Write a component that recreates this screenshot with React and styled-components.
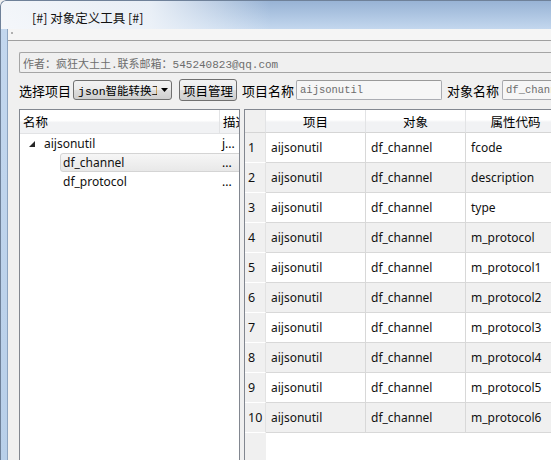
import React from 'react'
import styled, { createGlobalStyle } from 'styled-components'

const Global = createGlobalStyle`
  html, body {
    margin: 0;
    padding: 0;
    background: #f0f0f0;
  }
  body {
    font-family: "Noto Sans", "Noto Sans CJK SC", sans-serif;
    font-size: 12px;
    color: #000;
  }
`

const Window = styled.div`
  width: 551px;
  height: 460px;
  display: flex;
  flex-direction: column;
  overflow: hidden;
  border-top-left-radius: 6px;
  background: #f0f0f0;
`

const TitleBar = styled.div`
  height: 29px;
  flex: none;
  display: flex;
  align-items: center;
  padding: 4px 0 0 31px;
  box-sizing: border-box;
  border-top: 1px solid #6f8199;
  border-left: 1px solid #6f8199;
  border-top-left-radius: 6px;
  background:
    linear-gradient(to right, rgba(246, 248, 251, 0.96) 0, rgba(240, 244, 249, 0.9) 150px, rgba(255, 255, 255, 0) 270px),
    linear-gradient(#98b3d5, #c3d7ee);
  font-family: "Noto Sans CJK SC", sans-serif;
  font-size: 12.5px;
  color: #111;
`

const Body = styled.div`
  flex: 1;
  display: flex;
  min-height: 0;
`

const Frame = styled.div`
  width: 8px;
  flex: none;
  box-sizing: border-box;
  border-left: 1px solid #6f8199;
  border-right: 1px solid #8da4c0;
  background: linear-gradient(#c3d7ee, #b8cfe9);
`

const Client = styled.div`
  flex: 1;
  min-width: 0;
  display: flex;
  flex-direction: column;
  background: #f0f0f0;
`

const ToolStrip = styled.div`
  height: 11px;
  flex: none;
  border-bottom: 1px solid #a0a0a0;
  background: #f5f5f5;
  position: relative;
`

const Grip = styled.span`
  position: absolute;
  left: 3px;
  top: 3px;
  width: 2px;
  height: 2px;
  background: #b0b0b0;
`

const Content = styled.div`
  flex: 1;
  min-height: 0;
  display: flex;
  flex-direction: column;
  padding: 11px 0 0 11px;
`

const AuthorBox = styled.div`
  height: 21px;
  box-sizing: border-box;
  border: 1px solid #a5a5a5;
  border-right: none;
  border-radius: 2px 0 0 2px;
  background: #f0f0f0;
  display: flex;
  align-items: center;
  padding-left: 3px;
  font-family: "Liberation Mono", "Noto Sans CJK SC", monospace;
  font-size: 11px;
  color: #6d6d6d;
  white-space: nowrap;
  overflow: hidden;
`

const ControlRow = styled.div`
  margin-top: 6px;
  height: 22px;
  display: flex;
  align-items: center;
  white-space: nowrap;
`

const Label = styled.span`
  flex: none;
  font-family: "Noto Sans CJK SC", sans-serif;
  font-size: 13px;
  margin-right: ${p => p.$gap || 2}px;
  margin-left: ${p => p.$left || 0}px;
`

const Combo = styled.div`
  width: 99px;
  height: 20px;
  flex: none;
  box-sizing: border-box;
  border: 1px solid #707070;
  border-radius: 3px;
  background: linear-gradient(#f2f2f2 0, #ebebeb 50%, #dddddd 50%, #cfcfcf 100%);
  display: flex;
  align-items: center;
  padding-left: 4px;
  overflow: hidden;
`

const ComboText = styled.span`
  flex: 1;
  overflow: hidden;
  font-family: "Liberation Mono", "Noto Sans CJK SC", monospace;
  font-size: 11.5px;
`

const Arrow = styled.span`
  width: 14px;
  flex: none;
  display: flex;
  justify-content: center;
`

const Button = styled.div`
  flex: none;
  margin-left: 7px;
  margin-right: 5px;
  width: 58px;
  height: 22px;
  box-sizing: border-box;
  border: 1px solid #707070;
  border-radius: 3px;
  background: linear-gradient(#f2f2f2 0, #ebebeb 50%, #dddddd 50%, #cfcfcf 100%);
  display: flex;
  align-items: center;
  justify-content: center;
  font-family: "Noto Sans CJK SC", sans-serif;
  font-size: 12.5px;
`

const Field = styled.div`
  width: ${p => p.$w}px;
  height: 20px;
  flex: none;
  box-sizing: border-box;
  border: 1px solid #abadb3;
  border-top-color: #9a9a9a;
  border-radius: 2px;
  background: #f6f6f6;
  display: flex;
  align-items: center;
  padding-left: 3px;
  font-family: "Liberation Mono", monospace;
  font-size: 10.5px;
  color: #6d6d6d;
  overflow: hidden;
`

const Panels = styled.div`
  flex: 1;
  min-height: 0;
  margin-top: 8px;
  display: flex;
  gap: 4px;
`

const TreePanel = styled.div`
  width: 221px;
  flex: none;
  box-sizing: border-box;
  border: 1px solid #828790;
  border-bottom: none;
  background: #fff;
  overflow: hidden;
`

const TreeHeader = styled.div`
  height: 23px;
  display: flex;
  border-bottom: 1px solid #e2e3e5;
  background: linear-gradient(#ffffff 0, #ffffff 45%, #f1f2f4 55%, #f1f2f4 100%);
  font-family: "Noto Sans CJK SC", sans-serif;
  font-size: 12.5px;
`

const HeadCell = styled.div`
  width: ${p => p.$w}px;
  flex: none;
  display: flex;
  align-items: center;
  padding-left: 3px;
  box-sizing: border-box;
  border-right: 1px solid #e2e3e5;
  overflow: hidden;
  white-space: nowrap;
`

const TreeRows = styled.div`
  display: flex;
  flex-direction: column;
`

const TreeRow = styled.div`
  height: 19px;
  line-height: 19px;
  display: flex;
  align-items: center;
  position: relative;
`

const Node = styled.div`
  width: 199px;
  flex: none;
  display: flex;
  align-items: center;
  padding-left: ${p => p.$indent}px;
  box-sizing: border-box;
  height: 100%;
`

const Selection = styled.div`
  position: absolute;
  left: 40px;
  right: -4px;
  top: 0;
  bottom: 0;
  border: 1px solid #d4d4d4;
  border-radius: 3px;
  background: linear-gradient(#f6f6f6, #e8e8e8);
`

const NodeText = styled.span`
  position: relative;
  font-size: 12px;
  color: #111;
`

const Toggle = styled.svg`
  position: relative;
  width: 6px;
  height: 6px;
  margin-right: 9px;
`

const Desc = styled.span`
  position: relative;
  padding-left: 3px;
  font-size: 12px;
`

const GridPanel = styled.div`
  flex: 1;
  min-width: 0;
  box-sizing: border-box;
  border: 1px solid #828790;
  border-right: none;
  border-bottom: none;
  background: linear-gradient(to right, #f0f0f0 0, #f0f0f0 21px, #ffffff 21px);
  overflow: hidden;
`

const Table = styled.div`
  display: grid;
  grid-template-columns: 21px 100px 100px 100px;
  grid-auto-rows: 30px;
  grid-template-rows: 23px;
`

const ColHead = styled.div`
  display: flex;
  align-items: center;
  justify-content: center;
  border-right: 1px solid #e2e3e5;
  border-bottom: 1px solid #d5d5d5;
  background: linear-gradient(#ffffff 0, #ffffff 45%, #f1f2f4 55%, #f1f2f4 100%);
  font-family: "Noto Sans CJK SC", sans-serif;
  font-size: 12.5px;
  white-space: nowrap;
  ${p => p.$corner && 'background: #f0f0f0;'}
`

const RowHead = styled.div`
  display: flex;
  align-items: center;
  padding-left: 3px;
  border-bottom: 1px solid #ffffff;
  border-right: 1px solid #e2e2e2;
  background: #f0f0f0;
  font-size: 12.5px;
  color: #111;
`

const Cell = styled.div`
  display: flex;
  align-items: center;
  padding-left: 5px;
  border-right: 1px solid #d8d8d8;
  border-bottom: 1px solid #d8d8d8;
  background: ${p => (p.$alt ? '#f0f0f0' : '#ffffff')};
  white-space: nowrap;
  overflow: hidden;
  font-size: 12px;
  color: #111;
`

const props = ['fcode', 'description', 'type', 'm_protocol', 'm_protocol1', 'm_protocol2', 'm_protocol3', 'm_protocol4', 'm_protocol5', 'm_protocol6']

export default function App() {
  return (
    <Window>
      <Global />
      <TitleBar>[#] 对象定义工具 [#]</TitleBar>
      <Body>
        <Frame />
        <Client>
          <ToolStrip><Grip /></ToolStrip>
          <Content>
            <AuthorBox>作者：疯狂大土土.联系邮箱：545240823@qq.com</AuthorBox>
            <ControlRow>
              <Label>选择项目</Label>
              <Combo>
                <ComboText>json智能转换工具</ComboText>
                <Arrow>
                  <svg width="7" height="4" viewBox="0 0 7 4"><path d="M0 0h7L3.5 4z" fill="#000" /></svg>
                </Arrow>
              </Combo>
              <Button>项目管理</Button>
              <Label>项目名称</Label>
              <Field $w={146}>aijsonutil</Field>
              <Label $left={5} $gap={3}>对象名称</Label>
              <Field $w={60}>df_channel</Field>
            </ControlRow>
            <Panels>
              <TreePanel>
                <TreeHeader>
                  <HeadCell $w={200}>名称</HeadCell>
                  <HeadCell $w={40}>描述</HeadCell>
                </TreeHeader>
                <TreeRows>
                  <TreeRow>
                    <Node $indent={9}>
                      <Toggle viewBox="0 0 6 6"><path d="M6 0V6H0z" fill="#262626" /></Toggle>
                      <NodeText>aijsonutil</NodeText>
                    </Node>
                    <Desc>j...</Desc>
                  </TreeRow>
                  <TreeRow>
                    <Selection />
                    <Node $indent={43}>
                      <NodeText>df_channel</NodeText>
                    </Node>
                    <Desc>...</Desc>
                  </TreeRow>
                  <TreeRow>
                    <Node $indent={43}>
                      <NodeText>df_protocol</NodeText>
                    </Node>
                    <Desc>...</Desc>
                  </TreeRow>
                </TreeRows>
              </TreePanel>
              <GridPanel>
                <Table>
                  <ColHead $corner />
                  <ColHead>项目</ColHead>
                  <ColHead>对象</ColHead>
                  <ColHead>属性代码</ColHead>
                  {props.map((p, i) => (
                    <React.Fragment key={p}>
                      <RowHead>{i + 1}</RowHead>
                      <Cell $alt={i % 2 === 1}>aijsonutil</Cell>
                      <Cell $alt={i % 2 === 1}>df_channel</Cell>
                      <Cell $alt={i % 2 === 1}>{p}</Cell>
                    </React.Fragment>
                  ))}
                </Table>
              </GridPanel>
            </Panels>
          </Content>
        </Client>
      </Body>
    </Window>
  )
}
